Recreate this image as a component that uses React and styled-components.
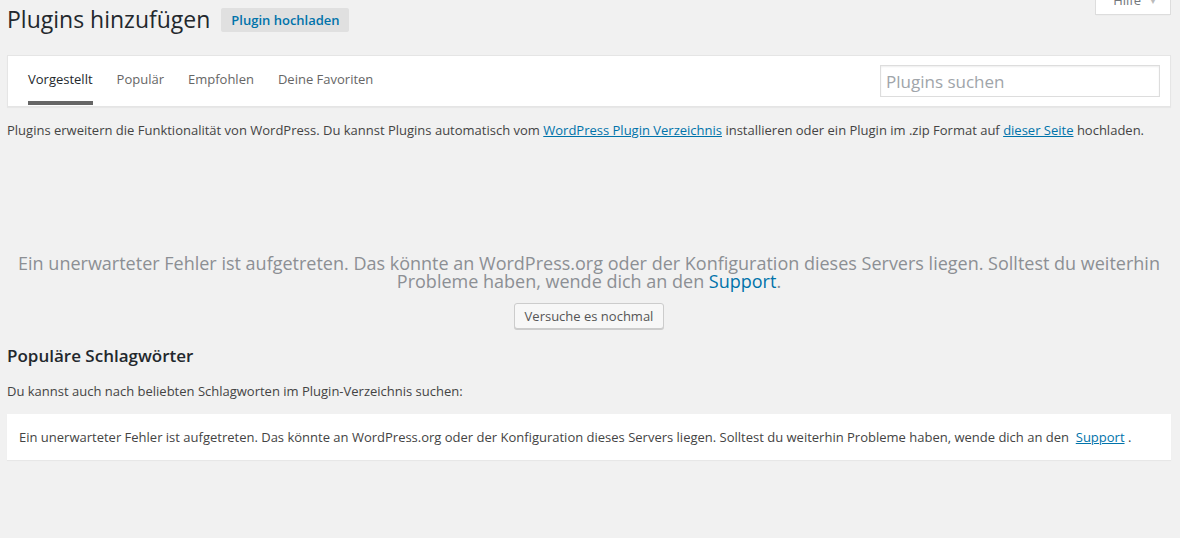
import styled, { createGlobalStyle } from "styled-components";

const GlobalStyle = createGlobalStyle`
  html, body {
    margin: 0;
    padding: 0;
    background: #f1f1f1;
    font-family: "Open Sans", "Noto Sans", sans-serif;
    color: #444;
    font-size: 13px;
    overflow: hidden;
  }
`;

const Wrap = styled.div`
  position: relative;
  padding: 0 9px 0 7px;
  height: 538px;
`;

const HelpTab = styled.button`
  position: absolute;
  top: -14px;
  right: 9px;
  width: 76px;
  height: 29px;
  background: #fff;
  border: 1px solid #ddd;
  border-top: none;
  font-family: inherit;
  font-size: 13px;
  color: #72777c;
  padding: 0 0 0 4px;
  display: flex;
  align-items: center;
  justify-content: center;
  gap: 8px;
  box-shadow: 0 1px 1px -1px rgba(0, 0, 0, 0.1);

  span {
    font-size: 8px;
    color: #bbb;
  }
`;

const Header = styled.div`
  display: flex;
  align-items: center;
  gap: 11px;
  padding-top: 5px;
`;

const Title = styled.h1`
  margin: 0;
  font-size: 23px;
  line-height: 29px;
  font-weight: 400;
  color: #23282d;
`;

const UploadButton = styled.button`
  height: 24px;
  padding: 0 9px 0 10px;
  border: none;
  border-radius: 2px;
  background: #e0e0e0;
  color: #0073aa;
  font-family: inherit;
  font-size: 13px;
  font-weight: 600;
  margin-top: 1px;
`;

const FilterBar = styled.div`
  margin-top: 21px;
  background: #fff;
  border: 1px solid #e5e5e5;
  box-shadow: 0 1px 1px rgba(0, 0, 0, 0.04);
  display: flex;
  align-items: flex-start;
  justify-content: space-between;
  height: 50px;
  padding: 0 10px 0 20px;
`;

const Tabs = styled.ul`
  display: flex;
  gap: 24px;
  margin: 0;
  padding: 0;
  list-style: none;
`;

const Tab = styled.li`
  padding: 14px 0 13px;
  line-height: 18px;
  font-size: 13px;
  color: ${(p) => (p.$active ? "#23282d" : "#666")};
  border-bottom: 4px solid ${(p) => (p.$active ? "#666" : "transparent")};
`;

const Search = styled.input`
  margin-top: 9px;
  width: 280px;
  height: 32px;
  box-sizing: border-box;
  border: 1px solid #ddd;
  box-shadow: inset 0 1px 2px rgba(0, 0, 0, 0.07);
  font-family: inherit;
  font-size: 17px;
  padding: 0 5px;
  color: #32373c;
  outline: none;

  &::placeholder {
    color: #a0a5aa;
  }
`;

const Text = styled.p`
  margin: ${(p) => p.$mt || 0}px 0 0;
  line-height: 18px;
  font-size: 13px;
  color: #444;
`;

const Link = styled.a`
  color: #0073aa;
  text-decoration: underline;
`;

const ErrorMessage = styled.p`
  margin: 115px 0 0;
  text-align: center;
  font-size: 18px;
  line-height: 18px;
  color: #8c8f94;

  a {
    color: #0073aa;
    text-decoration: none;
  }
`;

const RetryRow = styled.div`
  display: flex;
  justify-content: center;
  margin-top: 13px;
`;

const RetryButton = styled.button`
  height: 26px;
  padding: 0 10px;
  background: #f7f7f7;
  border: 1px solid #ccc;
  border-radius: 3px;
  box-shadow: 0 1px 0 #ccc;
  color: #555;
  font-family: inherit;
  font-size: 13px;
`;

const SectionTitle = styled.h2`
  margin: 16px 0 0;
  font-size: 17px;
  line-height: 22px;
  font-weight: 600;
  color: #23282d;
`;

const Notice = styled.div`
  margin-top: 14px;
  background: #fff;
  box-shadow: 0 1px 1px rgba(0, 0, 0, 0.04);
  padding: 14px 12px;
  line-height: 18px;
  font-size: 13px;
  color: #444;
`;

export default function App() {
  const tabs = ["Vorgestellt", "Populär", "Empfohlen", "Deine Favoriten"];
  return (
    <>
      <GlobalStyle />
      <Wrap>
        <HelpTab>
          Hilfe <span>▼</span>
        </HelpTab>
        <Header>
          <Title>Plugins hinzufügen</Title>
          <UploadButton>Plugin hochladen</UploadButton>
        </Header>

        <FilterBar>
          <Tabs>
            {tabs.map((t, i) => (
              <Tab key={t} $active={i === 0}>
                {t}
              </Tab>
            ))}
          </Tabs>
          <Search placeholder="Plugins suchen" />
        </FilterBar>

        <Text $mt={14}>
          Plugins erweitern die Funktionalität von WordPress. Du kannst Plugins automatisch vom{" "}
          <Link href="#">WordPress Plugin Verzeichnis</Link> installieren oder ein Plugin im .zip
          Format auf <Link href="#">dieser Seite</Link> hochladen.
        </Text>

        <ErrorMessage>
          Ein unerwarteter Fehler ist aufgetreten. Das könnte an WordPress.org oder der
          Konfiguration dieses Servers liegen. Solltest du weiterhin Probleme haben, wende dich an
          den <a href="#">Support</a>.
        </ErrorMessage>
        <RetryRow>
          <RetryButton>Versuche es nochmal</RetryButton>
        </RetryRow>

        <SectionTitle>Populäre Schlagwörter</SectionTitle>
        <Text $mt={15}>Du kannst auch nach beliebten Schlagworten im Plugin-Verzeichnis suchen:</Text>

        <Notice>
          Ein unerwarteter Fehler ist aufgetreten. Das könnte an WordPress.org oder der
          Konfiguration dieses Servers liegen. Solltest du weiterhin Probleme haben, wende dich an
          den&nbsp; <Link href="#">Support</Link> .
        </Notice>
      </Wrap>
    </>
  );
}
